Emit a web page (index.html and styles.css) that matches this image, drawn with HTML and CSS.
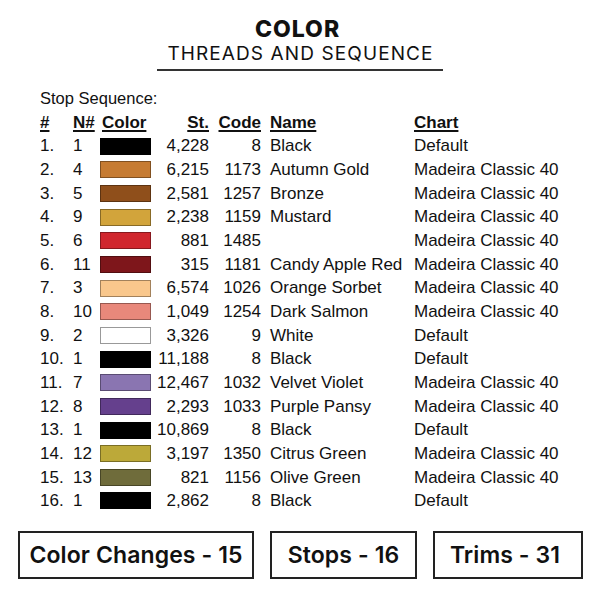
FILE: index.html
```html
<!DOCTYPE html>
<html>
<head>
<meta charset="utf-8">
<link rel="stylesheet" href="styles.css">
</head>
<body>
<div class="page">
  <header class="head">
    <div class="title">COLOR</div>
    <div class="subtitle">THREADS AND SEQUENCE</div>
    <div class="rule"></div>
  </header>
  <section class="table">
    <div class="caption">Stop Sequence:</div>
    <div class="row hdr">
      <span class="c-num"><u>#</u></span>
      <span class="c-n"><u>N#</u></span>
      <span class="c-color"><u>Color</u></span>
      <span class="c-st"><u>St.</u></span>
      <span class="c-code"><u>Code</u></span>
      <span class="c-name"><u>Name</u></span>
      <span class="c-chart"><u>Chart</u></span>
    </div>
    <div class="row"><span class="c-num">1.</span><span class="c-n">1</span><span class="c-color"><i class="sw k"></i></span><span class="c-st">4,228</span><span class="c-code">8</span><span class="c-name">Black</span><span class="c-chart">Default</span></div>
    <div class="row"><span class="c-num">2.</span><span class="c-n">4</span><span class="c-color"><i class="sw gold"></i></span><span class="c-st">6,215</span><span class="c-code">1173</span><span class="c-name">Autumn Gold</span><span class="c-chart">Madeira Classic 40</span></div>
    <div class="row"><span class="c-num">3.</span><span class="c-n">5</span><span class="c-color"><i class="sw bronze"></i></span><span class="c-st">2,581</span><span class="c-code">1257</span><span class="c-name">Bronze</span><span class="c-chart">Madeira Classic 40</span></div>
    <div class="row"><span class="c-num">4.</span><span class="c-n">9</span><span class="c-color"><i class="sw mustard"></i></span><span class="c-st">2,238</span><span class="c-code">1159</span><span class="c-name">Mustard</span><span class="c-chart">Madeira Classic 40</span></div>
    <div class="row"><span class="c-num">5.</span><span class="c-n">6</span><span class="c-color"><i class="sw red"></i></span><span class="c-st">881</span><span class="c-code">1485</span><span class="c-name"></span><span class="c-chart">Madeira Classic 40</span></div>
    <div class="row"><span class="c-num">6.</span><span class="c-n">11</span><span class="c-color"><i class="sw candy"></i></span><span class="c-st">315</span><span class="c-code">1181</span><span class="c-name">Candy Apple Red</span><span class="c-chart">Madeira Classic 40</span></div>
    <div class="row"><span class="c-num">7.</span><span class="c-n">3</span><span class="c-color"><i class="sw sorbet"></i></span><span class="c-st">6,574</span><span class="c-code">1026</span><span class="c-name">Orange Sorbet</span><span class="c-chart">Madeira Classic 40</span></div>
    <div class="row"><span class="c-num">8.</span><span class="c-n">10</span><span class="c-color"><i class="sw salmon"></i></span><span class="c-st">1,049</span><span class="c-code">1254</span><span class="c-name">Dark Salmon</span><span class="c-chart">Madeira Classic 40</span></div>
    <div class="row"><span class="c-num">9.</span><span class="c-n">2</span><span class="c-color"><i class="sw white"></i></span><span class="c-st">3,326</span><span class="c-code">9</span><span class="c-name">White</span><span class="c-chart">Default</span></div>
    <div class="row"><span class="c-num">10.</span><span class="c-n">1</span><span class="c-color"><i class="sw k"></i></span><span class="c-st">11,188</span><span class="c-code">8</span><span class="c-name">Black</span><span class="c-chart">Default</span></div>
    <div class="row"><span class="c-num">11.</span><span class="c-n">7</span><span class="c-color"><i class="sw violet"></i></span><span class="c-st">12,467</span><span class="c-code">1032</span><span class="c-name">Velvet Violet</span><span class="c-chart">Madeira Classic 40</span></div>
    <div class="row"><span class="c-num">12.</span><span class="c-n">8</span><span class="c-color"><i class="sw pansy"></i></span><span class="c-st">2,293</span><span class="c-code">1033</span><span class="c-name">Purple Pansy</span><span class="c-chart">Madeira Classic 40</span></div>
    <div class="row"><span class="c-num">13.</span><span class="c-n">1</span><span class="c-color"><i class="sw k"></i></span><span class="c-st">10,869</span><span class="c-code">8</span><span class="c-name">Black</span><span class="c-chart">Default</span></div>
    <div class="row"><span class="c-num">14.</span><span class="c-n">12</span><span class="c-color"><i class="sw citrus"></i></span><span class="c-st">3,197</span><span class="c-code">1350</span><span class="c-name">Citrus Green</span><span class="c-chart">Madeira Classic 40</span></div>
    <div class="row"><span class="c-num">15.</span><span class="c-n">13</span><span class="c-color"><i class="sw olive"></i></span><span class="c-st">821</span><span class="c-code">1156</span><span class="c-name">Olive Green</span><span class="c-chart">Madeira Classic 40</span></div>
    <div class="row"><span class="c-num">16.</span><span class="c-n">1</span><span class="c-color"><i class="sw k"></i></span><span class="c-st">2,862</span><span class="c-code">8</span><span class="c-name">Black</span><span class="c-chart">Default</span></div>
  </section>
  <footer class="stats">
    <div class="box box-changes">Color Changes - 15</div>
    <div class="box box-stops">Stops - 16</div>
    <div class="box box-trims">Trims - 31</div>
  </footer>
</div>
</body>
</html>
```
FILE: styles.css
```css
html, body {
  margin: 0;
  padding: 0;
  background: #fff;
}
.page {
  width: 600px;
  height: 600px;
  color: #111;
}
.head {
  display: flex;
  flex-direction: column;
  align-items: center;
  padding-top: 16px;
}
.title {
  font-family: "Inter", "DejaVu Sans", sans-serif;
  font-weight: 800;
  font-size: 23px;
  line-height: 26px;
  letter-spacing: 1px;
  margin-right: 5px;
  color: #111;
}
.subtitle {
  font-family: "Inter", "DejaVu Sans", sans-serif;
  font-weight: 400;
  font-size: 19px;
  line-height: 24px;
  letter-spacing: 1.1px;
  padding-left: 1px;
  color: #111;
}
.rule {
  width: 286px;
  height: 2px;
  background: #333;
  margin-top: 3px;
}
.table {
  padding-left: 40px;
  margin-top: 16px;
  font-family: "Liberation Sans", Arial, sans-serif;
  font-size: 17px;
  color: #111;
}
.caption {
  height: 23.67px;
  line-height: 23.67px;
  font-size: 16.5px;
}
.row {
  display: grid;
  grid-template-columns: 33px 27px 51px 58px 52px 153px auto;
  height: 23.67px;
  line-height: 23.67px;
  align-items: center;
  white-space: nowrap;
}
.hdr {
  font-weight: 700;
}
.hdr u {
  text-decoration-thickness: 2px;
  text-underline-offset: 2px;
}
.c-st, .c-code {
  text-align: right;
}
.c-name {
  padding-left: 9px;
}
.c-color {
  display: flex;
  align-items: center;
}
.hdr .c-color {
  display: block;
  padding-left: 2px;
}
.sw {
  display: block;
  width: 51px;
  height: 17px;
  box-sizing: border-box;
  border: 1px solid rgba(0,0,0,0.35);
}
.k { background: #000; }
.gold { background: #c67b32; }
.bronze { background: #8f4f1b; }
.mustard { background: #d2a43b; }
.red { background: #d0262e; }
.candy { background: #7e161b; }
.sorbet { background: #f9c78c; }
.salmon { background: #e8887b; }
.white { background: #fff; border-color: #999; }
.violet { background: #8a75b1; }
.pansy { background: #65408d; }
.citrus { background: #bca939; }
.olive { background: #6f6c3b; }
.stats {
  display: flex;
  gap: 16px;
  padding-left: 18px;
  margin-top: 18px;
}
.box {
  box-sizing: border-box;
  height: 48px;
  border: 2px solid #222;
  display: flex;
  align-items: center;
  justify-content: center;
  font-family: "Inter", "DejaVu Sans", sans-serif;
  font-weight: 600;
  font-size: 23px;
  letter-spacing: 0.1px;
  color: #111;
  white-space: nowrap;
}
.box-changes { width: 236px; }
.box-stops { width: 147px; }
.box-trims { width: 150px; padding-right: 6px; }
```
